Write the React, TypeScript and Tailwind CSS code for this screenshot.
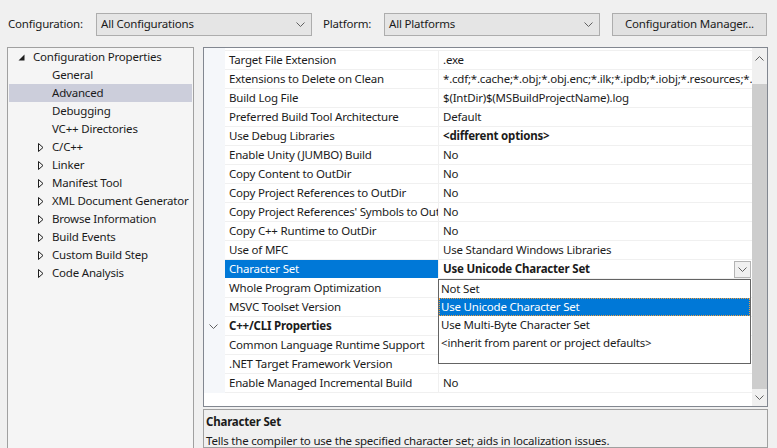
import React from 'react';

type Row = {
  name: string;
  value?: string;
  bold?: boolean;
  category?: boolean;
  selected?: boolean;
};

const rows: Row[] = [
  { name: 'Target File Extension', value: '.exe' },
  {
    name: 'Extensions to Delete on Clean',
    value: '*.cdf;*.cache;*.obj;*.obj.enc;*.ilk;*.ipdb;*.iobj;*.resources;*.tlb;*.tli;*.tlh;*.tmp;*.rsp',
  },
  { name: 'Build Log File', value: '$(IntDir)$(MSBuildProjectName).log' },
  { name: 'Preferred Build Tool Architecture', value: 'Default' },
  { name: 'Use Debug Libraries', value: '<different options>', bold: true },
  { name: 'Enable Unity (JUMBO) Build', value: 'No' },
  { name: 'Copy Content to OutDir', value: 'No' },
  { name: 'Copy Project References to OutDir', value: 'No' },
  { name: "Copy Project References' Symbols to OutDir", value: 'No' },
  { name: 'Copy C++ Runtime to OutDir', value: 'No' },
  { name: 'Use of MFC', value: 'Use Standard Windows Libraries' },
  { name: 'Character Set', value: 'Use Unicode Character Set', bold: true, selected: true },
  { name: 'Whole Program Optimization' },
  { name: 'MSVC Toolset Version' },
  { name: 'C++/CLI Properties', category: true },
  { name: 'Common Language Runtime Support' },
  { name: '.NET Target Framework Version' },
  { name: 'Enable Managed Incremental Build', value: 'No' },
];

const tree = [
  { label: 'Configuration Properties', level: 0, expanded: true },
  { label: 'General', level: 1 },
  { label: 'Advanced', level: 1, selected: true },
  { label: 'Debugging', level: 1 },
  { label: 'VC++ Directories', level: 1 },
  { label: 'C/C++', level: 1, collapsed: true },
  { label: 'Linker', level: 1, collapsed: true },
  { label: 'Manifest Tool', level: 1, collapsed: true },
  { label: 'XML Document Generator', level: 1, collapsed: true },
  { label: 'Browse Information', level: 1, collapsed: true },
  { label: 'Build Events', level: 1, collapsed: true },
  { label: 'Custom Build Step', level: 1, collapsed: true },
  { label: 'Code Analysis', level: 1, collapsed: true },
];

const options = [
  'Not Set',
  'Use Unicode Character Set',
  'Use Multi-Byte Character Set',
  '<inherit from parent or project defaults>',
];

const Chevron = ({ className = '' }: { className?: string }) => (
  <svg width="9" height="5" viewBox="0 0 9 5" className={className}>
    <path d="M0.5 0.5 L4.5 4.5 L8.5 0.5" fill="none" stroke="#606060" strokeWidth="1" />
  </svg>
);

const Combo = ({ text }: { text: string }) => (
  <div className="w-[216px] h-[23px] flex items-center justify-between pl-[4px] pr-[6px] bg-[#e5e5e5] border border-[#adadad]">
    <span>{text}</span>
    <Chevron />
  </div>
);

export default function App() {
  return (
    <div className="w-[777px] h-[448px] overflow-hidden bg-[#f0f0f0] text-[11.5px] tracking-[-0.2px] leading-none text-[#1b1b1b] font-['Segoe_UI','Noto_Sans',sans-serif]">
      {/* Toolbar */}
      <div className="h-[47px] flex items-center pl-2 pt-[1px]">
        <span className="w-[88px]">Configuration:</span>
        <Combo text="All Configurations" />
        <span className="w-[72px] pl-[11px]">Platform:</span>
        <Combo text="All Platforms" />
        <button className="ml-[12px] w-[155px] h-[23px] bg-[#e1e1e1] border border-[#adadad] text-center">
          Configuration Manager...
        </button>
      </div>

      <div className="flex h-[401px]">
        {/* Tree */}
        <div className="ml-[7px] w-[187px] h-[420px] border border-[#a0a0a0] bg-[#f5f5f5] px-[1px]">
          {tree.map((t) => (
            <div
              key={t.label}
              className={`h-[18px] flex items-center whitespace-nowrap ${t.selected ? 'bg-[#cccedb]' : ''}`}
            >
              {t.level === 0 ? (
                <div className="w-[24px] shrink-0 pl-[9px] flex items-center">
                  <svg width="7" height="7" viewBox="0 0 7 7">
                    <path d="M6.5 0.5 L6.5 6.5 L0.5 6.5 Z" fill="#1e1e1e" />
                  </svg>
                </div>
              ) : (
                <div className="w-[43px] shrink-0 pl-[29px] flex items-center">
                  {t.collapsed && (
                    <svg width="6" height="9" viewBox="0 0 6 9">
                      <path d="M0.5 0.5 L5 4.5 L0.5 8.5 Z" fill="none" stroke="#1e1e1e" strokeWidth="1" />
                    </svg>
                  )}
                </div>
              )}
              <span>{t.label}</span>
            </div>
          ))}
        </div>

        {/* Right column */}
        <div className="ml-[9px] w-[565px] flex flex-col">
          {/* Property grid */}
          <div className="relative shrink-0 h-[360px] border border-[#828790] bg-white flex">
            <div className="w-[548px] flex flex-col overflow-hidden">
              <div className="h-[3px] shrink-0 flex">
                <div className="w-[21px] bg-[#f5f7fa]" />
                <div className="flex-1 border-b border-[#f0f0f0]" />
              </div>
              {rows.map((r) => (
                <div key={r.name} className="h-[19px] shrink-0 flex">
                  <div className="w-[21px] shrink-0 bg-[#f5f7fa] flex items-center pl-[5px]">
                    {r.category && <Chevron />}
                  </div>
                  <div
                    className={`w-[214px] shrink-0 pl-[4px] flex items-center whitespace-nowrap overflow-hidden border-b border-r ${
                      r.selected
                        ? 'bg-[#0078d7] text-white border-b-white border-r-[#f0f0f0]'
                        : 'border-[#f0f0f0]'
                    } ${r.category ? 'font-bold' : ''}`}
                  >
                    {r.name}
                  </div>
                  <div
                    className={`flex-1 min-w-0 pl-[4px] flex items-center whitespace-nowrap overflow-hidden border-b border-[#f0f0f0] ${
                      r.bold ? 'font-bold' : ''
                    }`}
                  >
                    <span className="flex-1">{r.value}</span>
                    {r.selected && (
                      <div className="w-[17px] h-[17px] mr-[1px] border border-[#b4b4b4] bg-[#f0f0f0] flex items-center justify-center">
                        <Chevron />
                      </div>
                    )}
                  </div>
                </div>
              ))}
            </div>

            {/* Scrollbar */}
            <div className="w-[15px] bg-[#f0f0f0] flex flex-col items-center">
              <div className="h-[20px] flex items-center justify-center">
                <Chevron className="rotate-180" />
              </div>
              <div className="mt-[16px] w-full h-[305px] bg-[#cdcdcd]" />
              <div className="flex-1 flex items-center justify-center">
                <Chevron />
              </div>
            </div>

            {/* Open dropdown list */}
            <div className="absolute left-[234px] top-[231px] w-[313px] h-[85px] bg-white border border-[#646464]">
              {options.map((o, i) => (
                <div
                  key={o}
                  className={`h-[18px] pl-[2px] flex items-center whitespace-nowrap ${
                    i === 1 ? 'bg-[#0078d7] text-white outline-1 outline-dotted outline-[#f0a040] -outline-offset-1' : ''
                  }`}
                >
                  {o}
                </div>
              ))}
            </div>
          </div>

          {/* Description */}
          <div className="mt-[2px] flex-1 border border-[#a0a0a0] bg-[#f0f0f0] px-[2px] pt-[6px]">
            <div className="font-bold">Character Set</div>
            <div className="mt-[7px]">Tells the compiler to use the specified character set; aids in localization issues.</div>
          </div>
        </div>
      </div>
    </div>
  );
}
